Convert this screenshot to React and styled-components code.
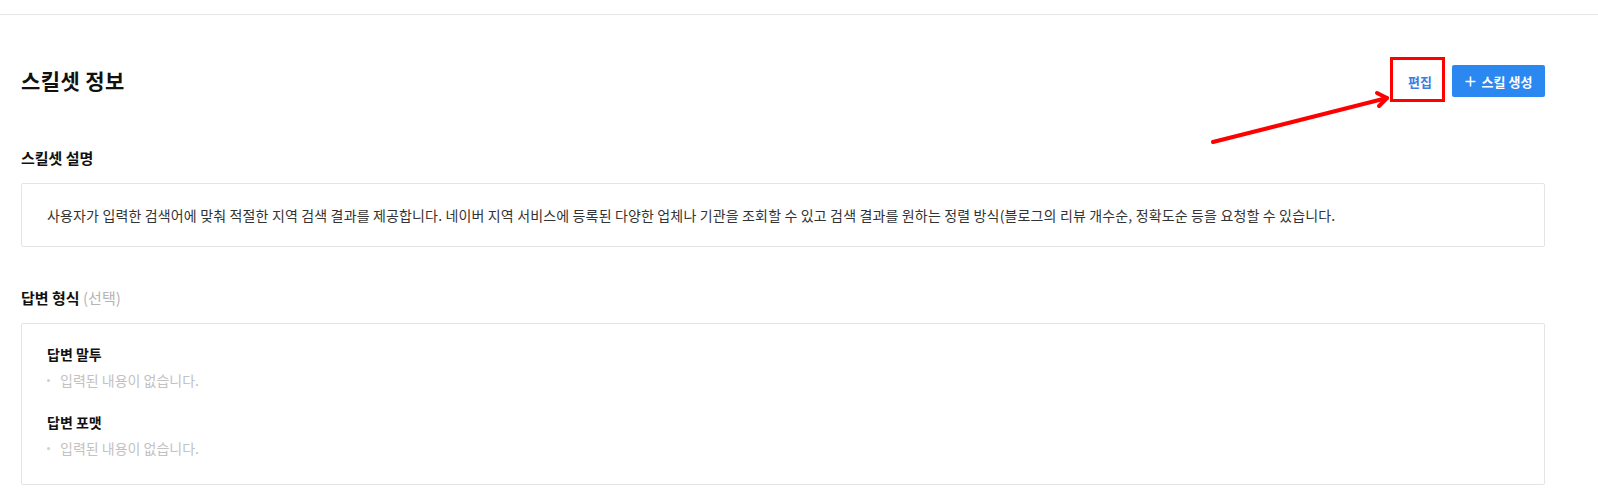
import React from 'react';
import styled, { createGlobalStyle } from 'styled-components';

const GlobalStyle = createGlobalStyle`
  html, body {
    margin: 0;
    padding: 0;
    background: #fff;
  }
  body {
    font-family: "Noto Sans CJK KR", "Noto Sans", sans-serif;
    color: #222;
  }
`

const Page = styled.div`
    position: relative;
    width: 1598px;
    height: 495px;
    overflow: hidden;
`

const TopBar = styled.div`
    height: 14px;
    border-bottom: 1px solid #e6e6e6;
`

const Content = styled.div`
    padding: 0 53px 0 21px;
`

const HeaderRow = styled.div`
    display: flex;
    align-items: center;
    justify-content: space-between;
    padding-top: 50px;
    height: 32px;
`

const PageTitle = styled.h2`
    margin: 0;
    font-size: 21px;
    font-weight: 700;
    letter-spacing: 0.4px;
    color: #111;
    line-height: 28px;
    margin-top: -3px;
`

const Actions = styled.div`
    display: flex;
    align-items: center;
    gap: 8px;
`

const TextButton = styled.button`
    position: relative;
    height: 32px;
    padding: 0 12px;
    border: 0;
    background: none;
    font-family: inherit;
    font-size: 13px;
    font-weight: 700;
    color: #3b7fe0;
    cursor: pointer;
`

const PrimaryButton = styled.button`
    display: flex;
    align-items: center;
    gap: 6px;
    height: 32px;
    width: 93px;
    justify-content: center;
    border: 0;
    border-radius: 2px;
    background: #2b88f1;
    font-family: inherit;
    font-size: 13px;
    font-weight: 700;
    color: #fff;
    cursor: pointer;
`

const Highlight = styled.span`
    position: absolute;
    top: -8px;
    left: -6px;
    right: -1px;
    bottom: -5px;
    border: 3px solid #ff0000;
    pointer-events: none;
`

const SectionTitle = styled.h3`
    margin: ${props => props.top}px 0 14px;
    font-size: 15px;
    font-weight: 600;
    line-height: 22px;
    color: #111;
`

const Optional = styled.span`
    font-weight: 400;
    color: #b5b5b5;
`

const Card = styled.div`
    border: 1px solid #e4e4e4;
    border-radius: 2px;
    padding: ${props => props.pad};
`

const Description = styled.p`
    margin: 0;
    font-size: 14px;
    letter-spacing: 0.15px;
    line-height: 20px;
    color: #333;
`

const Group = styled.div`
    & + & {
        margin-top: 22px;
    }
`

const GroupTitle = styled.h4`
    margin: 0 0 6px;
    font-size: 14px;
    font-weight: 700;
    line-height: 20px;
    color: #111;
`

const EmptyItem = styled.div`
    display: flex;
    align-items: center;
    gap: 10px;
    font-size: 14px;
    line-height: 20px;
    color: #c2c2c2;

    &::before {
        content: '';
        width: 3px;
        height: 3px;
        border-radius: 50%;
        background: #cfcfcf;
    }
`

const Annotation = styled.svg`
    position: absolute;
    top: 0;
    left: 0;
    pointer-events: none;
`

const groups = ['답변 말투', '답변 포맷'];

const App = () => {
    return (
        <Page>
            <GlobalStyle />
            <TopBar />
            <Content>
                <HeaderRow>
                    <PageTitle>스킬셋 정보</PageTitle>
                    <Actions>
                        <TextButton>
                            편집
                            <Highlight />
                        </TextButton>
                        <PrimaryButton>
                            <svg width="11" height="11" viewBox="0 0 11 11">
                                <path d="M5.5 0.5v10M0.5 5.5h10" stroke="#fff" strokeWidth="1.6" />
                            </svg>
                            스킬 생성
                        </PrimaryButton>
                    </Actions>
                </HeaderRow>

                <SectionTitle top={50}>스킬셋 설명</SectionTitle>
                <Card pad="21px 25px">
                    <Description>
                        사용자가 입력한 검색어에 맞춰 적절한 지역 검색 결과를 제공합니다. 네이버 지역 서비스에 등록된 다양한 업체나 기관을 조회할 수 있고 검색 결과를 원하는 정렬 방식(블로그의 리뷰 개수순, 정확도순 등을 요청할 수 있습니다.
                    </Description>
                </Card>

                <SectionTitle top={40}>답변 형식 <Optional>(선택)</Optional></SectionTitle>
                <Card pad="20px 25px 26px">
                    {groups.map(g => (
                        <Group key={g}>
                            <GroupTitle>{g}</GroupTitle>
                            <EmptyItem>입력된 내용이 없습니다.</EmptyItem>
                        </Group>
                    ))}
                </Card>
            </Content>

            <Annotation width="1598" height="495">
                <g stroke="#ff0000" strokeWidth="4" strokeLinecap="round" fill="none">
                    <path d="M1213 142L1387 98" />
                    <path d="M1377 93L1387 98L1379 106" strokeLinejoin="round" />
                </g>
            </Annotation>
        </Page>
    )
}

export default App;
